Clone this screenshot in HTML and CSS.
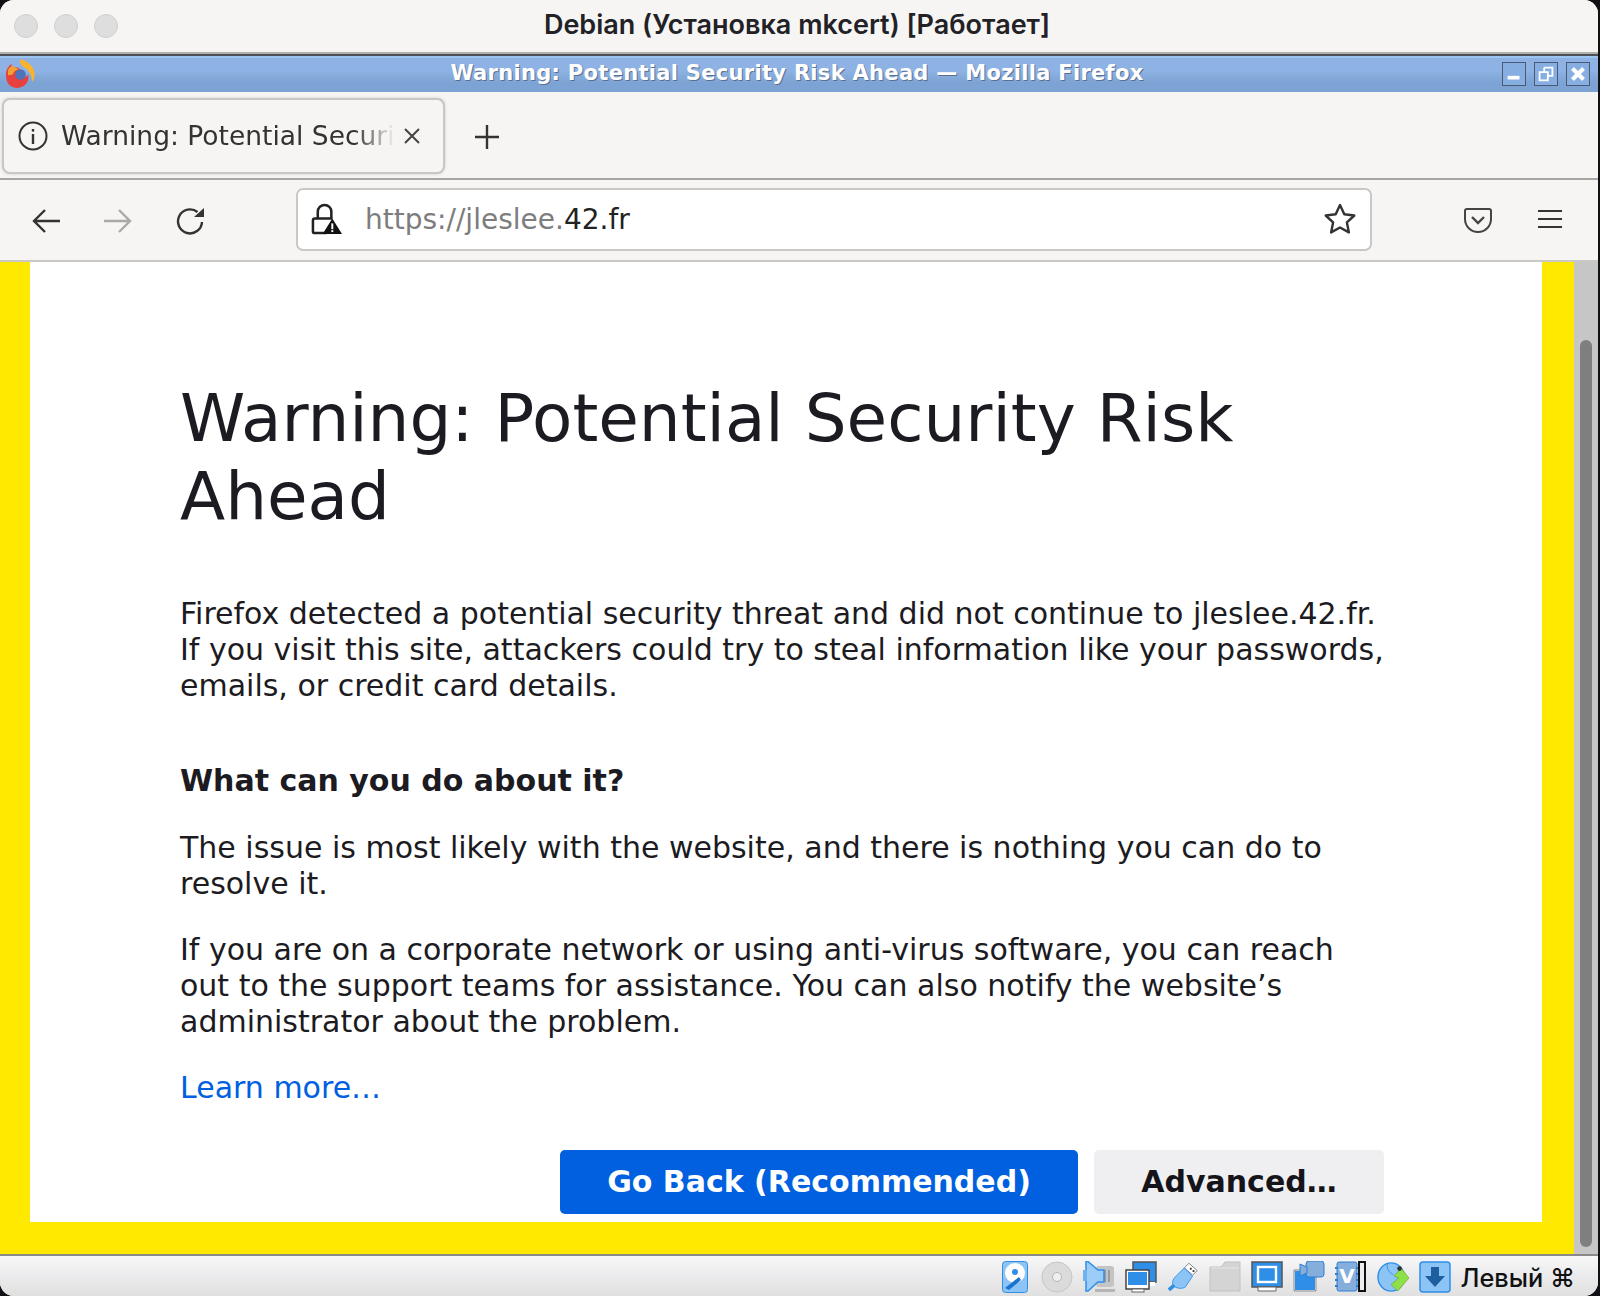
FILE: index.html
```html
<!DOCTYPE html>
<html lang="en">
<head>
<meta charset="utf-8">
<title>Debian (Установка mkcert) [Работает]</title>
<link rel="stylesheet" href="styles.css">
</head>
<body>
<div class="window">
  <header class="mac-title">
    <div class="lights"><span class="light"></span><span class="light"></span><span class="light"></span></div>
    <div class="mac-text">Debian (Установка mkcert) [Работает]</div>
  </header>
  <div class="xfce-title">
    <svg class="fx-logo" viewBox="0 0 30 30"><path d="M0 17C0 11 2 8 6 5c-.5 2-.5 3 .5 4.500 2-1 4-1 6.500-.5l4 5-3 4c3 2 7 1 9-2 1 5-1 9-4 11.500-5 3.500-11 3-15 0-2.500-2.500-4-6-4-10.500z" fill="#e8403f"/><path d="M15 0c6 2 12 6 14 12 1 4 1 8-2 12 0-7-3-13-9-16-3-2-4-4-3-8z" fill="#fbb32b"/><path d="M2 13c0-3 2-5 5-6 1 2 5 2 6 4-3 0-5 2-6 5l-5 1z" fill="#f3a22f"/><circle cx="15" cy="16" r="5.500" fill="#4f73b8"/></svg>
    <div class="xfce-text">Warning: Potential Security Risk Ahead — Mozilla Firefox</div>
    <div class="wm-buttons">
      <div class="wm-btn"><svg viewBox="0 0 24 24"><rect x="5" y="14" width="13" height="4" fill="#fff"/></svg></div>
      <div class="wm-btn"><svg viewBox="0 0 24 24"><path d="M10 5h9v9h-5M5 10h9v9H5zM10 5v5" fill="none" stroke="#fff" stroke-width="2"/></svg></div>
      <div class="wm-btn"><svg viewBox="0 0 24 24"><path d="M6 6l12 12M18 6L6 18" stroke="#fff" stroke-width="4.500"/></svg></div>
    </div>
  </div>
  <div class="tabbar">
    <div class="tab">
      <svg class="tab-info" viewBox="0 0 30 30"><circle cx="15" cy="15" r="13.500" fill="none" stroke="#333" stroke-width="2"/><rect x="13.800" y="13" width="2.400" height="10" fill="#333"/><rect x="13.800" y="8" width="2.400" height="2.600" fill="#333"/></svg>
      <span class="tab-label">Warning: Potential Security Risk Ahead</span>
      <svg class="tab-close" viewBox="0 0 18 18"><path d="M2 2l14 14M16 2L2 16" stroke="#444" stroke-width="2"/></svg>
    </div>
    <svg class="tab-new" viewBox="0 0 26 26"><path d="M13 1v24M1 13h24" stroke="#333" stroke-width="2.400"/></svg>
  </div>
  <nav class="navbar">
    <svg class="nav-icon nav-back" viewBox="0 0 30 30"><path d="M29 15H3M14 4L3 15l11 11" fill="none" stroke="#333" stroke-width="2.400"/></svg>
    <svg class="nav-icon nav-forward" viewBox="0 0 30 30"><path d="M1 15h26M16 4l11 11-11 11" fill="none" stroke="#a9a9a9" stroke-width="2.400"/></svg>
    <svg class="nav-icon nav-reload" viewBox="0 0 30 30"><path d="M26 15A12 12 0 1 1 21.500 5" fill="none" stroke="#333" stroke-width="2.400"/><path d="M18 10h10V1z" fill="#333"/></svg>
    <div class="urlbar">
      <svg class="url-lock" viewBox="0 0 32 34"><path d="M7 16V9a7 7 0 0 1 14 0v7" fill="none" stroke="#222" stroke-width="2.600"/><path d="M16 31H4a2 2 0 0 1-2-2V18a2 2 0 0 1 2-2h18" fill="none" stroke="#222" stroke-width="2.600"/><path d="M22 16l10 16H12z" fill="#111"/><rect x="21" y="21" width="2" height="6" fill="#fff"/><rect x="21" y="28" width="2" height="2" fill="#fff"/></svg>
      <div class="url-text"><span class="url-dim">https://jleslee.</span>42.fr</div>
      <svg class="url-star" viewBox="0 0 32 32"><path d="M16 2l4.300 9.300 10 1.200-7.400 6.900 2 10L16 24.500 7.100 29.400l2-10-7.400-6.900 10-1.200z" fill="none" stroke="#333" stroke-width="2.400" stroke-linejoin="round"/></svg>
    </div>
    <svg class="nav-icon nav-pocket" viewBox="0 0 28 26"><path d="M3 1h22a2 2 0 0 1 2 2v8a13 13 0 0 1-26 0V3a2 2 0 0 1 2-2z" fill="none" stroke="#444" stroke-width="2"/><path d="M8 9l6 6 6-6" fill="none" stroke="#444" stroke-width="2.400"/></svg>
    <svg class="nav-icon nav-menu" viewBox="0 0 24 20"><path d="M0 2h24M0 10h24M0 18h24" stroke="#333" stroke-width="2.200"/></svg>
  </nav>
  <div class="viewport">
    <main class="page">
      <div class="page-inner">
        <h1>Warning: Potential Security Risk Ahead</h1>
        <p class="intro">Firefox detected a potential security threat and did not continue to jleslee.42.fr. If you visit this site, attackers could try to steal information like your passwords, emails, or credit card details.</p>
        <h2>What can you do about it?</h2>
        <p>The issue is most likely with the website, and there is nothing you can do to resolve it.</p>
        <p>If you are on a corporate network or using anti-virus software, you can reach out to the support teams for assistance. You can also notify the website’s administrator about the problem.</p>
        <p><a class="learn" href="#">Learn more…</a></p>
        <div class="actions">
          <button class="btn btn-primary">Go Back (Recommended)</button>
          <button class="btn btn-secondary">Advanced…</button>
        </div>
      </div>
    </main>
    <div class="scrollbar"><div class="thumb"></div></div>
  </div>
  <footer class="statusbar">
    <svg class="st" viewBox="0 0 32 32"><rect x="3.500" y=".5" width="25" height="31" rx="3" fill="#8cc4f6" stroke="#2f8fe8"/><circle cx="16" cy="12" r="10" fill="#fff"/><circle cx="16" cy="11" r="3" fill="#2f8fe8"/><path d="M6 27l14-11 2 3-12 10z" fill="#1d74cf"/></svg>
    <svg class="st" viewBox="0 0 32 32"><circle cx="16" cy="16" r="15" fill="#dbdbdb" stroke="#c6c6c6"/><circle cx="16" cy="16" r="4.500" fill="#efefef" stroke="#b5b5b5"/></svg>
    <svg class="st" viewBox="0 0 32 32"><rect x="13" y="5" width="18" height="21" rx="3" fill="#c4c4c4"/><path d="M18 9v12M22 9v12M26 9v12" stroke="#8f8f8f" stroke-width="1.500"/><rect x="12" y="28" width="20" height="3" fill="#b5b5b5"/><path d="M3 .5h2l10 8.500h6v12h-6L5 30H3z" fill="#9bcdf8" stroke="#2f8fe8" stroke-width="1.500"/><rect x="0" y="9" width="4" height="11" fill="#6fb2f0"/></svg>
    <svg class="st" viewBox="0 0 32 32"><rect x="8" y="1" width="23" height="20" fill="#2f8fe8" stroke="#555" stroke-width="1.500"/><rect x="9" y="21" width="21" height="4" fill="#fff"/><rect x="1" y="9" width="23" height="19" fill="#fff" stroke="#444" stroke-width="1.500"/><rect x="3" y="11" width="19" height="13" fill="#2f8fe8"/><rect x="7" y="28" width="12" height="3" fill="#fff" stroke="#666"/></svg>
    <svg class="st" viewBox="0 0 35 32"><path d="M24 1l9 8-5 5-9-8z" fill="#fff" stroke="#777"/><rect x="25" y="6" width="2" height="2" fill="#333"/><rect x="28" y="8.500" width="2" height="2" fill="#333"/><path d="M19 6l9 9-8 12c-3 2-9 2-12-1-3-2-2-6 0-9z" fill="#8cc4f6" stroke="#2f8fe8"/><path d="M8 25l-6 5" stroke="#2f8fe8" stroke-width="4"/></svg>
    <svg class="st" viewBox="0 0 32 32"><path d="M1 6h11l4-5h15v29H1z" fill="#d4d4d4" stroke="#c2c2c2"/><path d="M2 7h28" stroke="#e6e6e6"/></svg>
    <svg class="st" viewBox="0 0 32 32"><rect x="1" y="1" width="30" height="25" fill="#2f8fe8" stroke="#555" stroke-width="1.500"/><rect x="7" y="6" width="18" height="15" fill="#2f8fe8" stroke="#fff" stroke-width="2.400"/><path d="M7 26h18v4H7z" fill="#fff" stroke="#666"/></svg>
    <svg class="st" viewBox="0 0 32 32"><rect x="1" y="9" width="22" height="21" fill="#2f8fe8" stroke="#fff" stroke-width="2"/><rect x="1" y="9" width="22" height="21" fill="none" stroke="#555" stroke-width=".8"/><rect x="13" y="0" width="18" height="16" rx="3" fill="#86aedd" stroke="#2f7fd0"/><path d="M7 3l7 3v6l-7 3z" fill="#86aedd" stroke="#2f7fd0"/></svg>
    <svg class="st" viewBox="0 0 32 32"><rect x="2" y="1" width="20" height="29" rx="2" fill="#86aedd" stroke="#2f7fd0"/><path d="M0 7h3M0 13h3M0 19h3M0 25h3M21 7h3M21 13h3M21 19h3M21 25h3" stroke="#2f7fd0" stroke-width="1.800"/><text class="v-chip" x="12" y="22" text-anchor="middle">V</text><rect x="24" y="1" width="6" height="29" fill="#eee" stroke="#111" stroke-width="2"/></svg>
    <svg class="st" viewBox="0 0 34 32"><ellipse cx="15" cy="16" rx="14" ry="15" fill="#8cc4f6" stroke="#2f8fe8" stroke-width="1.500"/><path d="M11 1.500c-1 5 1 9 6 12" fill="none" stroke="#2f8fe8"/><path d="M18 15l8-8 8 10-12 14-7-7 8-7z" fill="#8de047" stroke="#5c9a2a" stroke-width=".6"/><circle cx="24" cy="7" r="2.500" fill="#333"/></svg>
    <svg class="st" viewBox="0 0 32 32"><rect x="1" y="1" width="30" height="30" rx="3" fill="#8cc4f6" stroke="#2f8fe8" stroke-width="1.500"/><path d="M12 6h8v9h6L16 26 6 15h6z" fill="#1d5f9f"/></svg>
    <span class="host-key">Левый ⌘</span>
  </footer>
</div>
</body>
</html>
```
FILE: styles.css
```css
* { box-sizing: border-box; }
html, body { margin: 0; height: 100%; background: #101015; overflow: hidden; }
.window {
  width: 1598px; height: 1296px; display: flex; flex-direction: column;
  border-radius: 14px; overflow: hidden; background: #f6f5f3;
}
.mac-title {
  height: 56px; flex: none; position: relative; display: flex; align-items: center; justify-content: center;
  background: linear-gradient(#f6f5f3 calc(100% - 2px), #b0b0ae calc(100% - 2px));
  border-bottom: 2px solid #4f5055; padding: 0 4px 6px 0;
}
.lights { position: absolute; left: 14px; top: 14px; display: flex; gap: 16px; }
.light { width: 24px; height: 24px; border-radius: 50%; background: #dedede; border: 1px solid #cfcfcf; }
.mac-text { font: 600 27px "Inter", sans-serif; color: #222226; }
.xfce-title {
  height: 36px; flex: none; position: relative; display: flex; align-items: center; justify-content: center;
  background: linear-gradient(#9cc6f2 0, #9cc6f2 2px, #8db2e3 2px, #8db2e3 40%, #7ca3d3 75%, #7ca3d3 100%);
}
.fx-logo { position: absolute; left: 6px; top: 3px; width: 29px; height: 29px; }
.xfce-text {
  font: 700 21px "DejaVu Sans", sans-serif; letter-spacing: .3px; color: #fff;
  text-shadow: 1px 1px 0 #5c6f8d; margin: -2px 4px 0 0;
}
.wm-buttons { position: absolute; right: 8px; top: 6px; display: flex; gap: 8px; }
.wm-btn { width: 24px; height: 24px; border: 1px solid #4a5a75; background: #86aee0; }
.wm-btn svg { display: block; width: 22px; height: 22px; }
.tabbar {
  height: 88px; flex: none; display: flex; align-items: center; padding: 0 0 0 2px;
  background: #f6f5f3; border-bottom: 2px solid #a8a6a2;
}
.tab {
  width: 443px; height: 76px; margin-top: 1px; display: flex; align-items: center; padding-left: 14px;
  background: #f6f5f3; border: 2px solid #c8c7c3; border-radius: 8px; box-shadow: 0 0 3px #ccc;
}
.tab-info { width: 30px; height: 30px; flex: none; }
.tab-label {
  font: 400 26.5px "DejaVu Sans", sans-serif; color: #333; white-space: nowrap; overflow: hidden;
  width: 334px; margin-left: 13px; flex: none;
  -webkit-mask-image: linear-gradient(to right, #000 88%, transparent 100%);
  mask-image: linear-gradient(to right, #000 88%, transparent 100%);
}
.tab-close { width: 18px; height: 18px; flex: none; margin-left: 8px; }
.tab-new { width: 26px; height: 26px; margin-left: 29px; margin-top: 3px; }
.navbar {
  height: 82px; flex: none; display: flex; align-items: center; padding-bottom: 2px;
  background: #f6f5f3; border-bottom: 2px solid #c9c8c5;
}
.nav-icon { flex: none; }
.nav-back { width: 30px; height: 30px; margin-left: 31px; margin-top: 3px; }
.nav-forward { width: 30px; height: 30px; margin-left: 42px; margin-top: 3px; }
.nav-reload { width: 30px; height: 30px; margin-left: 43px; margin-top: 5px; }
.urlbar {
  width: 1076px; height: 63px; margin-left: 90px; flex: none; display: flex; align-items: center;
  padding: 0 14px; background: #fff; border: 2px solid #c9c8c5; border-radius: 7px;
}
.url-lock { width: 31px; height: 33px; flex: none; margin-left: -1px; }
.url-text { font: 400 28px "DejaVu Sans", sans-serif; color: #222; margin-left: 23px; flex: 1; }
.url-dim { color: #7d7d7d; }
.url-star { width: 32px; height: 32px; flex: none; }
.nav-pocket { width: 28px; height: 26px; margin-left: 92px; margin-top: 3px; }
.nav-menu { width: 24px; height: 20px; margin-left: 46px; }
.viewport { flex: 1; min-height: 0; display: flex; background: #ffe900; }
.page {
  flex: 1; min-width: 0; padding: 0 32px 32px 30px; display: flex;
}
.page-inner {
  flex: 1; background: #fff; padding: 118px 158px 0 150px; overflow: hidden;
  font: 400 30px/36px "DejaVu Sans", sans-serif; color: #1c1b22;
}
h1 { font: 400 66px/78px "DejaVu Sans", sans-serif; margin: 0 0 60px; }
h2 { font: 700 30px/36px "DejaVu Sans", sans-serif; margin: 59px 0 31px; }
p { margin: 0 0 30px; }
.learn { color: #0060df; text-decoration: none; }
.actions { display: flex; justify-content: flex-end; gap: 16px; margin-top: 44px; }
.btn {
  height: 64px; border: 0; border-radius: 5px; font: 700 30px "DejaVu Sans", sans-serif; padding: 0 0 2px;
}
.btn-primary { background: #0060df; color: #fff; width: 518px; }
.btn-secondary { background: #efeff2; color: #15141a; width: 290px; }
.scrollbar { width: 24px; flex: none; background: #c6c6c6; padding: 78px 6px 7px; }
.thumb { height: 100%; background: #7f7f7f; border-radius: 6px; }
.statusbar {
  height: 42px; flex: none; display: flex; align-items: center; justify-content: flex-end; gap: 10px;
  padding: 2px 23px 0 0; border-top: 2px solid #8a8a8a;
  background: linear-gradient(#f8f8f8, #ececee 45%, #e0e0e0);
}
.st { width: 32px; height: 32px; flex: none; }
.v-chip { font: 700 20px "DejaVu Sans", sans-serif; fill: #fff; }
.host-key { font: 500 25.3px "Inter", sans-serif; color: #111; white-space: nowrap; }
```
